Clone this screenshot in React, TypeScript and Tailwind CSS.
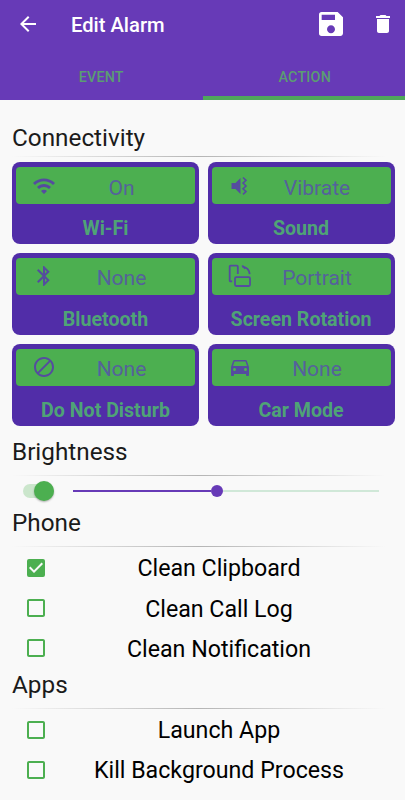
import React from 'react';
import {
  MdArrowBack,
  MdBlock,
  MdBluetooth,
  MdCheckBox,
  MdCheckBoxOutlineBlank,
  MdDelete,
  MdDirectionsCar,
  MdSave,
  MdWifi,
} from 'react-icons/md';

function VibrateIcon() {
  return (
    <svg width="24" height="24" viewBox="0 0 24 24" fill="none">
      <path d="M3.500 9h4l5-5v16l-5-5h-4z" fill="currentColor" />
      <path d="M15 3.500l3 2.800-3 2.800 3 2.900-3 2.800 3 2.800-3 2.800" stroke="currentColor" strokeWidth="1.6" />
    </svg>
  );
}

function RotationIcon() {
  return (
    <svg width="24" height="24" viewBox="0 0 24 24" fill="none" stroke="currentColor" strokeWidth="1.8">
      <path d="M4.200 17.300H2.600a.9.900 0 0 1-.9-.9V2.600a.9.900 0 0 1 .9-.9h6.300a.9.900 0 0 1 .9.9V10" />
      <rect x="7" y="13.200" width="15" height="8.800" rx="1.200" />
      <path d="M14.500 2.600c4 .6 6.700 3.500 7.200 7.500" />
      <path d="M14.200 1.500l3 3.200" />
    </svg>
  );
}

interface Tile {
  icon: React.ReactNode;
  value: string;
  label: string;
}

const tiles: Tile[] = [
  { icon: <MdWifi size={24} />, value: 'On', label: 'Wi-Fi' },
  { icon: <VibrateIcon />, value: 'Vibrate', label: 'Sound' },
  { icon: <MdBluetooth size={24} />, value: 'None', label: 'Bluetooth' },
  { icon: <RotationIcon />, value: 'Portrait', label: 'Screen Rotation' },
  { icon: <MdBlock size={24} />, value: 'None', label: 'Do Not Disturb' },
  { icon: <MdDirectionsCar size={24} />, value: 'None', label: 'Car Mode' },
];

function TileCard({ icon, value, label }: Tile) {
  return (
    <div className="h-[82px] rounded-lg bg-[#512da8] px-1 pt-[5px]">
      <div className="flex h-[37px] items-center rounded bg-[#4caf50] pr-[8px] pl-[16px] text-[#55619c]">
        <span className="w-6 shrink-0 text-[#554c9f]">{icon}</span>
        <span className="flex-1 pt-[4px] text-center text-[21px] leading-6">{value}</span>
      </div>
      <div className="pt-[13px] text-center text-[19.600px] leading-6 font-bold text-[#4fa376]">{label}</div>
    </div>
  );
}

function Divider() {
  return <div className="ml-3 h-px w-[374px] bg-linear-to-r from-transparent via-[#b5b5b5] to-transparent" />;
}

function Heading({ children }: { children: string }) {
  return <h2 className="pl-3 text-[24.300px] leading-7 text-[#1b1b1b]">{children}</h2>;
}

function CheckRow({ label, checked = false }: { label: string; checked?: boolean }) {
  return (
    <div className="flex h-[40.300px] items-center pl-[23.500px]">
      <span className="w-6 shrink-0 text-[#4caf50]">
        {checked ? <MdCheckBox size={24} /> : <MdCheckBoxOutlineBlank size={24} />}
      </span>
      <span className="w-[343px] pt-px text-center text-[23.200px] leading-7 text-black">{label}</span>
    </div>
  );
}

export default function App() {
  return (
    <div className="h-[800px] w-[405px] overflow-hidden bg-[#f9f9f9] font-['Roboto',sans-serif]">
      <header className="h-[100px] bg-[#673ab7]">
        <div className="flex h-[53px] items-center pr-[10px] pb-[5px] pl-4 text-white">
          <MdArrowBack size={24} />
          <h1 className="ml-[31px] flex-1 pt-0.5 text-[20.200px] leading-6 font-medium">Edit Alarm</h1>
          <MdSave size={32} />
          <MdDelete size={24} className="ml-6" />
        </div>
        <nav className="grid h-[47px] grid-cols-2 text-center text-[14.300px] font-medium tracking-[0.200px] text-[#5b9d72]">
          <div className="pt-[14px] leading-5">EVENT</div>
          <div className="border-b-4 border-[#4fa75b] pt-[14px] pl-0.5 leading-5">ACTION</div>
        </nav>
      </header>

      <section className="pt-6">
        <Heading>Connectivity</Heading>
        <div className="mt-1">
          <Divider />
        </div>
        <div className="mt-[5px] ml-3 grid w-[382.500px] grid-cols-2 gap-x-[8.500px] gap-y-[8.800px]">
          {tiles.map((tile) => (
            <TileCard key={tile.label} {...tile} />
          ))}
        </div>
      </section>

      <section className="pt-[12px]">
        <Heading>Brightness</Heading>
        <div className="mt-[9px]">
          <Divider />
        </div>
        <div className="flex h-[30px] items-center pl-[23px]">
          <div className="flex h-[14px] w-[31px] items-center justify-end rounded-full bg-[#cbe6cc]">
            <div className="size-5 shrink-0 rounded-full bg-[#4caf50] shadow-[0_1px_2px_rgba(0,0,0,0.3)]" />
          </div>
          <div className="ml-[19px] flex w-[306px] items-center">
            <div className="h-0.5 w-[138px] bg-[#673ab7]" />
            <div className="size-3 rounded-full bg-[#673ab7]" />
            <div className="h-0.5 flex-1 bg-[#d0e8d8]" />
          </div>
        </div>
      </section>

      <section className="pt-[3px]">
        <Heading>Phone</Heading>
        <div className="mt-[9px] pb-px">
          <Divider />
        </div>
        <CheckRow label="Clean Clipboard" checked />
        <CheckRow label="Clean Call Log" />
        <CheckRow label="Clean Notification" />
      </section>

      <section className="pt-[3px]">
        <Heading>Apps</Heading>
        <div className="mt-[9px]">
          <Divider />
        </div>
        <CheckRow label="Launch App" />
        <CheckRow label="Kill Background Process" />
      </section>
    </div>
  );
}
